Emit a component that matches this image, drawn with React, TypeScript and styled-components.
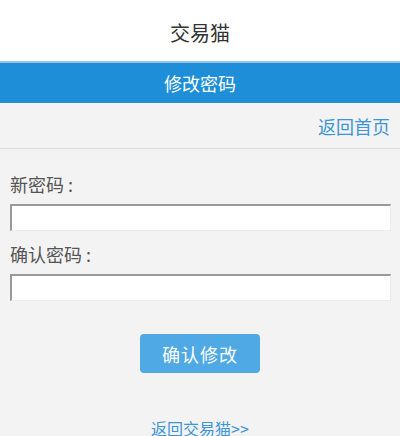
import React from "react";
import styled, { createGlobalStyle } from "styled-components";

const Global = createGlobalStyle`
  html, body { margin: 0; padding: 0; background: #f3f3f3; }
  body { font-family: "Noto Sans CJK SC", "Noto Sans", sans-serif; }
  * { box-sizing: border-box; }
`;

const Page = styled.div`
  width: 400px;
  height: 436px;
  overflow: hidden;
  background: #f3f3f3;
  display: flex;
  flex-direction: column;
  & > * { flex-shrink: 0; }
`;

const Header = styled.header`
  height: 61px;
  background: #fff;
  display: flex;
  align-items: center;
  justify-content: center;
  font-size: 20px;
  color: #333;
  padding-top: 4px;
`;

const TitleBar = styled.div`
  height: 42px;
  background: #1e8ed8;
  border-top: 2px solid #8ec6ee;
  display: flex;
  align-items: center;
  justify-content: center;
  color: #fff;
  font-size: 18px;
`;

const Nav = styled.div`
  height: 46px;
  border-bottom: 1px solid #dcdcdc;
  display: flex;
  align-items: center;
  justify-content: flex-end;
  padding-right: 10px;
`;

const BlueLink = styled.a<{ $size: number }>`
  color: #3c95d6;
  font-size: ${(p) => p.$size}px;
  text-decoration: none;
`;

const Form = styled.form`
  display: flex;
  flex-direction: column;
  padding: 22px 9px 0 10px;
`;

const Label = styled.label`
  font-size: 18px;
  color: #555;
  line-height: 26px;
  margin-bottom: 7px;
`;

const Input = styled.input`
  height: 27px;
  width: 100%;
  background: #fff;
  border-style: solid;
  border-width: 2px 1px 1px 2px;
  border-color: #9a9a9a #ececec #ececec #9a9a9a;
  margin-bottom: 10px;
  outline: none;
`;

const Actions = styled.div`
  display: flex;
  justify-content: center;
  padding-top: 23px;
`;

const Submit = styled.button`
  width: 120px;
  height: 39px;
  background: #4fa9e4;
  color: #fff;
  border: none;
  border-radius: 4px;
  font-family: inherit;
  font-size: 18px;
  letter-spacing: 1px;
  padding: 0;
`;

const Footer = styled.div`
  display: flex;
  justify-content: center;
  padding-top: 43px;
`;

export default function App() {
  return (
    <>
      <Global />
      <Page>
        <Header>交易猫</Header>
        <TitleBar>修改密码</TitleBar>
        <Nav>
          <BlueLink $size={18} href="#">返回首页</BlueLink>
        </Nav>
        <Form onSubmit={(e) => e.preventDefault()}>
          <Label>新密码 :</Label>
          <Input type="password" />
          <Label>确认密码 :</Label>
          <Input type="password" />
        </Form>
        <Actions>
          <Submit type="button">确认修改</Submit>
        </Actions>
        <Footer>
          <BlueLink $size={16} href="#">返回交易猫&gt;&gt;</BlueLink>
        </Footer>
      </Page>
    </>
  );
}
